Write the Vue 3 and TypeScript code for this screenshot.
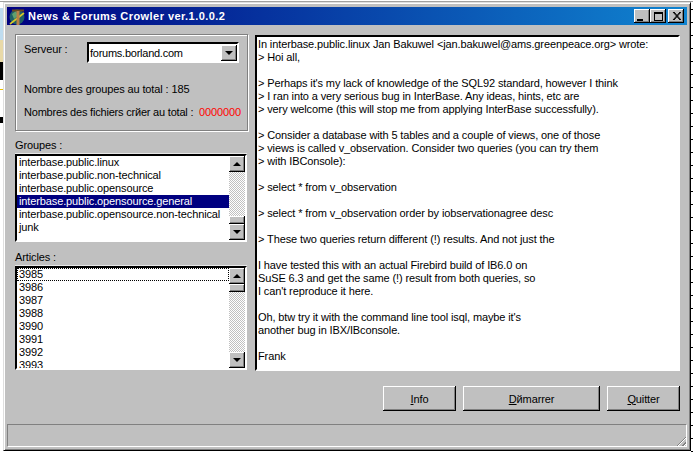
<script setup lang="ts">
const groups = [
  'interbase.public.linux',
  'interbase.public.non-technical',
  'interbase.public.opensource',
  'interbase.public.opensource.general',
  'interbase.public.opensource.non-technical',
  'junk',
]
const articles = ['3985', '3986', '3987', '3988', '3990', '3991', '3992', '3993']
const lines = [
  'In interbase.public.linux Jan Bakuwel <jan.bakuwel@ams.greenpeace.org> wrote:',
  '> Hoi all,',
  '',
  "> Perhaps it's my lack of knowledge of the SQL92 standard, however I think",
  '> I ran into a very serious bug in InterBase. Any ideas, hints, etc are',
  '> very welcome (this will stop me from applying InterBase successfully).',
  '',
  '> Consider a database with 5 tables and a couple of views, one of those',
  '> views is called v_observation. Consider two queries (you can try them',
  '> with IBConsole):',
  '',
  '> select * from v_observation',
  '',
  '> select * from v_observation order by iobservationagree desc',
  '',
  '> These two queries return different (!) results. And not just the',
  '',
  'I have tested this with an actual Firebird build of IB6.0 on',
  'SuSE 6.3 and get the same (!) result from both queries, so',
  "I can't reproduce it here.",
  '',
  "Oh, btw try it with the command line tool isql, maybe it's",
  'another bug in IBX/IBconsole.',
  '',
  'Frank',
]
</script>

<template>
  <div class="desk">
    <div class="window">
      <div class="titlebar">
        <svg class="appicon" width="17" height="17" viewBox="0 0 17 17">
          <circle cx="8" cy="9" r="7.5" fill="#1f5f66" />
          <path d="M3 6 L7 3 L9 8 L5 11 Z" fill="#5fa070" />
          <path d="M1 16 L15 5" stroke="#d8c828" stroke-width="1.6" />
          <path d="M3 2.5 H15" stroke="#6b4a20" stroke-width="2" />
          <path d="M9 3 V17" stroke="#b88048" stroke-width="3" />
        </svg>
        <span class="title">News &amp; Forums Crowler ver.1.0.0.2</span>
        <div class="caps">
          <button class="cap"><span class="g-min"></span></button>
          <button class="cap"><span class="g-max"></span></button>
          <button class="cap close">
            <svg width="9" height="8" viewBox="0 0 9 8"><path d="M1 0 L8 8 M2 0 L9 8 M8 0 L1 8 M9 0 L2 8" stroke="#000" stroke-width="1" /></svg>
          </button>
        </div>
      </div>

      <div class="body">
        <div class="left">
          <div class="panel">
            <div class="srow">
              <span class="slabel">Serveur :</span>
              <div class="combo">
                <span class="cval">forums.borland.com</span>
                <span class="arrowbtn"><i class="down"></i></span>
              </div>
            </div>
            <div class="stat one">Nombre des groupes au total : 185</div>
            <div class="stat two"><span class="crier">Nombres des fichiers crйer au total :</span><span class="red">0000000</span></div>
          </div>

          <div class="lab l1">Groupes :</div>
          <div class="list groups">
            <div class="items">
              <div v-for="(g, i) in groups" :key="g" class="item" :class="{ sel: i === 3 }">{{ g }}</div>
            </div>
            <div class="sb">
              <span class="arrowbtn"><i class="up"></i></span>
              <div class="track tr1"><span class="thumb"></span></div>
              <span class="arrowbtn"><i class="down"></i></span>
            </div>
          </div>

          <div class="lab l2">Articles :</div>
          <div class="list articles">
            <div class="items">
              <div v-for="(a, i) in articles" :key="a" class="item" :class="{ foc: i === 0 }">{{ a }}</div>
            </div>
            <div class="sb">
              <span class="arrowbtn"><i class="up"></i></span>
              <div class="track tr2"><span class="thumb"></span></div>
              <span class="arrowbtn"><i class="down"></i></span>
            </div>
          </div>
        </div>

        <div class="memo">
          <div v-for="(l, i) in lines" :key="i" class="mline">{{ l }}</div>
        </div>
      </div>

      <div class="buttons">
        <button class="btn info"><u>I</u>nfo</button>
        <button class="btn start"><u>D</u>йmarrer</button>
        <button class="btn quit"><u>Q</u>uitter</button>
      </div>

      <div class="status"><span class="grip"></span></div>
    </div>
  </div>
</template>

<style>
html, body { margin: 0; padding: 0; background: #fff; overflow: hidden; }
</style>

<style scoped>
.desk {
  width: 693px;
  height: 452px;
  box-sizing: border-box;
  padding: 2px 2px 0 3px;
  background-color: #fff;
  background-image:
    linear-gradient(180deg, transparent 0 1px, #a0a0a0 1px 2px, transparent 2px),
    repeating-linear-gradient(180deg, transparent 0 9px, #000 9px 10px, transparent 10px 13px),
    linear-gradient(180deg, #fff 0 8px, #bfdcef 8px 40px, #e8d9a8 40px 62px, #000 62px 80px, #fff 80px 89px, #e8c000 89px 90px, #fff 90px 117px, #000 117px 123px, #fff 123px);
  background-size: 100% 100%, 2px 100%, 3px 100%;
  background-position: left top, right top, left top;
  background-repeat: no-repeat;
  overflow: hidden;
  font-family: "Liberation Sans", Arial, sans-serif;
  font-size: 11px;
  letter-spacing: -0.12px;
  color: #000;
}
.window {
  box-sizing: border-box;
  width: 688px;
  height: 449px;
  background: #c0c0c0;
  border-top: 1px solid #dfdfdf;
  border-left: 1px solid #dfdfdf;
  border-right: 1px solid #000;
  border-bottom: 1px solid #000;
  box-shadow: inset 1px 1px 0 #fff, inset -1px -1px 0 #808080;
  padding: 4px 3px 2px 3px;
  display: flex;
  flex-direction: column;
}
.titlebar {
  height: 18px;
  flex: none;
  width: 680px;
  box-sizing: border-box;
  background: linear-gradient(90deg, #000080, #1084d0);
  display: flex;
  align-items: center;
  padding: 0 3px 0 2px;
  color: #fff;
}
.appicon { flex: none; margin-right: 2px; }
.title { font-weight: 700; font-size: 11px; letter-spacing: 0.44px; white-space: nowrap; }
.caps { margin-left: auto; display: flex; }
.cap {
  width: 16px;
  height: 14px;
  padding: 0;
  margin: 0;
  background: #c0c0c0;
  border: 0;
  box-shadow: inset -1px -1px 0 #000, inset 1px 1px 0 #fff, inset -2px -2px 0 #808080;
  display: flex;
  align-items: center;
  justify-content: center;
}
.close { margin-left: 2px; }
.g-min { width: 6px; height: 2px; background: #000; margin: 7px 5px 0 0; }
.g-max { width: 9px; height: 9px; box-sizing: border-box; border: 1px solid #000; border-top-width: 2px; }
.body {
  display: flex;
  flex: none;
  height: 346px;
  padding: 9px 0 0 8px;
  gap: 7px;
}
.left { width: 233px; flex: none; }
.panel {
  box-sizing: border-box;
  width: 233px;
  height: 97px;
  border: 1px solid #808080;
  box-shadow: inset 1px 1px 0 #fff, 1px 1px 0 #fff;
  padding: 7px 6px 0 8px;
}
.srow { display: flex; height: 22px; }
.slabel { width: 63px; flex: none; line-height: 14px; }
.combo {
  box-sizing: border-box;
  width: 152px;
  height: 21px;
  background: #fff;
  border: 2px solid;
  border-color: #000 #fff #fff #000;
  display: flex;
  align-items: center;
  justify-content: space-between;
  padding-left: 1px;
}
.cval { line-height: 14px; letter-spacing: -0.25px; }
.stat { white-space: nowrap; line-height: 14px; }
.one { margin-top: 18px; }
.two { margin-top: 9px; display: flex; justify-content: space-between; }
.crier { letter-spacing: -0.2px; }
.red { color: #f00; }
.lab { line-height: 14px; height: 14px; }
.l1 { margin-top: 7px; }
.l2 { margin-top: 8px; }
.list {
  box-sizing: border-box;
  width: 232px;
  background: #fff;
  border: 2px solid;
  border-color: #000 #fff #fff #000;
  box-shadow: 0 -1px 0 #e8e8e8;
  display: flex;
  overflow: hidden;
}
.groups { height: 88px; margin-top: 2px; }
.articles { height: 104px; margin-top: 2px; }
.items { flex: 1; min-width: 0; overflow: hidden; }
.item {
  box-sizing: border-box;
  height: 13px;
  line-height: 13px;
  padding-left: 2px;
  white-space: nowrap;
}
.sel { background: #000080; color: #fff; }
.foc { outline: 1px dotted #000; outline-offset: -1px; }
.sb {
  width: 16px;
  flex: none;
  display: flex;
  flex-direction: column;
}
.arrowbtn {
  width: 16px;
  height: 16px;
  flex: none;
  background: #c0c0c0;
  box-shadow: inset -1px -1px 0 #000, inset 1px 1px 0 #fff, inset -2px -2px 0 #808080;
  display: flex;
  align-items: center;
  justify-content: center;
  box-sizing: border-box;
}
.down, .up { width: 0; height: 0; border-left: 4px solid transparent; border-right: 4px solid transparent; }
.down { border-top: 4px solid #000; }
.up { border-bottom: 4px solid #000; }
.track {
  flex: 1;
  background-color: #fff;
  background-image: conic-gradient(#c0c0c0 25%, #fff 0 50%, #c0c0c0 0 75%, #fff 0);
  background-size: 2px 2px;
  position: relative;
}
.thumb {
  display: block;
  position: absolute;
  left: 0;
  width: 16px;
  height: 8px;
  background: #c0c0c0;
  box-shadow: inset -1px -1px 0 #000, inset 1px 1px 0 #fff, inset -2px -2px 0 #808080;
}
.tr1 .thumb { bottom: 0; }
.tr2 .thumb { top: 0; }
.memo {
  box-sizing: border-box;
  width: 425px;
  height: 336px;
  margin-top: 1px;
  flex: none;
  background: #fff;
  border: 2px solid;
  border-color: #000 #fff #fff #000;
  padding: 1px 2px 0 1px;
  overflow: hidden;
}
.mline { height: 13px; line-height: 13px; white-space: nowrap; }
.buttons {
  display: flex;
  flex: none;
  height: 25px;
  margin-top: 6px;
  padding-left: 376px;
  gap: 7px;
}
.btn {
  box-sizing: border-box;
  height: 25px;
  padding: 0;
  margin: 0;
  font: inherit;
  letter-spacing: inherit;
  color: #000;
  background: #c0c0c0;
  border: 0;
  box-shadow: inset -1px -1px 0 #000, inset 1px 1px 0 #fff, inset -2px -2px 0 #808080;
}
.info { width: 73px; }
.start { width: 137px; }
.quit { width: 73px; }
.status {
  margin: 13px 0 0 0;
  width: 680px;
  height: 23px;
  flex: none;
  box-sizing: border-box;
  border: 1px solid;
  border-color: #808080 #fff #fff #808080;
  position: relative;
}
.grip {
  position: absolute;
  right: 0;
  bottom: 0;
  width: 12px;
  height: 12px;
  background: repeating-linear-gradient(135deg, transparent 0 2px, #808080 2px 3px, #fff 3px 4px);
  clip-path: polygon(100% 0, 100% 100%, 0 100%);
}
</style>
